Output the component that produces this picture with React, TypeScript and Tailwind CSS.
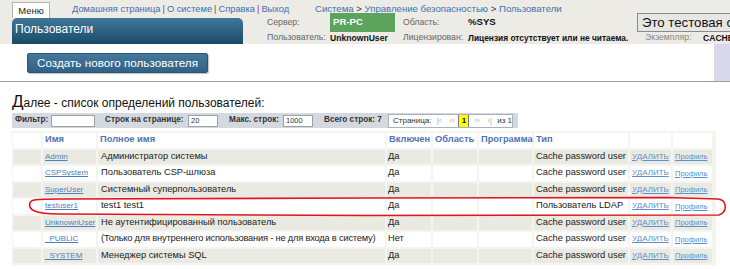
import React from "react";

const rows: [string, string, string, string][] = [
  ["Admin", "Администратор системы", "Да", "Cache password user"],
  ["CSPSystem", "Пользователь CSP-шлюза", "Да", "Cache password user"],
  ["SuperUser", "Системный суперпользователь", "Да", "Cache password user"],
  ["testuser1", "test1 test1", "Да", "Пользователь LDAP"],
  ["UnknownUser", "Не аутентифицированный пользователь", "Да", "Cache password user"],
  ["_PUBLIC", "(Только для внутреннего использования - не для входа в систему)", "Нет", "Cache password user"],
  ["_SYSTEM", "Менеджер системы SQL", "Да", "Cache password user"],
];

function Sep() {
  return <span className="text-[#8a3a66] mx-[2px]">|</span>;
}

export default function App() {
  return (
    <div className="relative w-[730px] h-[269px] overflow-hidden bg-white font-['Liberation_Sans',Arial,sans-serif] text-[#222]">
      {/* Header */}
      <div className="h-[44px] bg-[#ecebe5] flex">
        <div className="w-[267px] shrink-0 pl-[12px] flex flex-col">
          <div className="h-[18px] flex items-start">
            <div className="shrink-0 mt-[2px] w-[38px] h-[16px] bg-white border border-[#b4b4ac] border-b-0 text-[9.4px] leading-[15px] text-center text-[#222]">
              Меню
            </div>
            <div className="shrink-0 ml-[22px] mt-[3px] text-[9.3px] leading-[12px] whitespace-nowrap text-[#3d6fb0]">
              Домашняя страница<Sep />О системе<Sep />Справка<Sep />Выход
            </div>
          </div>
          <div className="w-[231px] h-[26px] rounded-t-[5px] bg-gradient-to-b from-[#3f7899] to-[#1b4a68] text-white text-[12px] leading-[14px] pl-[3px] pt-[3.5px]">
            Пользователи
          </div>
        </div>
        <div className="flex-1 flex flex-col text-[8.7px] whitespace-nowrap">
          <div className="h-[13px] pl-[48px] pt-[3px] text-[9.6px] leading-[11px] text-[#3f72b0]">
            Система <span className="text-[#333]">&gt;</span> Управление безопасностью <span className="text-[#333]">&gt;</span> Пользователи
          </div>
          <div className="h-[19px] flex items-center">
            <div className="w-[63px] shrink-0 text-[#666]">Сервер:</div>
            <div className="w-[65px] shrink-0 h-[19px] bg-[#5ca35e] text-white font-bold text-[9.6px] flex items-center pl-[3px]">PR-PC</div>
            <div className="ml-[8px] w-[65px] shrink-0 text-[#666]">Область:</div>
            <div className="w-[169px] shrink-0 font-bold text-[9.6px] text-[#111]">%SYS</div>
            <div className="h-[19px] w-[120px] shrink-0 bg-[#e6e6e4] border border-[#8a8a8a] text-[13.2px] leading-[17px] pl-[4px] text-[#111]">
              Это тестовая система
            </div>
          </div>
          <div className="h-[12px] flex items-center">
            <div className="w-[63px] shrink-0 text-[#666]">Пользователь:</div>
            <div className="w-[73px] shrink-0 font-bold text-[8.6px] text-[#111]">UnknownUser</div>
            <div className="w-[65px] shrink-0 text-[#666]">Лицензирован:</div>
            <div className="w-[177px] shrink-0 font-bold text-[8.4px] text-[#111]">Лицензия отсутствует или не читаема.</div>
            <div className="w-[58px] shrink-0 text-[#888]">Экземпляр:</div>
            <div className="shrink-0 font-bold text-[8.6px] text-[#111]">CACHE</div>
          </div>
        </div>
      </div>

      {/* Button area */}
      <div className="h-[38px] flex border-b border-[#9c9c9c]">
        <div className="pl-[27px] pt-[9px]">
          <div className="w-[181px] h-[20px] rounded-[2px] bg-gradient-to-b from-[#44779a] to-[#2f6284] border border-[#2a5675] shadow-[1px_1px_1px_rgba(0,0,0,0.25)] text-white text-[11.7px] leading-[18px] text-center">
            Создать нового пользователя
          </div>
        </div>
        <div className="ml-auto w-[16px] h-full bg-[#d8d8ea]" />
      </div>

      {/* Heading */}
      <div className="h-[31px] pl-[12px] pt-[11px] leading-[17px] text-[12px] text-[#111] whitespace-nowrap">
        <span className="text-[17px]">Д</span>алее - список определений пользователей:
      </div>

      {/* Filter bar */}
      <div className="ml-[12px] w-[506px] h-[15px] bg-[#d3d9df] flex items-center pl-[3px] text-[8.2px] font-bold text-[#333] whitespace-nowrap">
        <div className="w-[36px] shrink-0">Фильтр:</div>
        <div className="w-[44px] shrink-0 h-[12px] bg-white border border-[#a0a0a0]" />
        <div className="ml-[10px] w-[83px] shrink-0">Строк на странице:</div>
        <div className="w-[30px] shrink-0 h-[12px] bg-white border border-[#a0a0a0] text-[7.5px] font-normal leading-[10px] pl-[2px]">20</div>
        <div className="ml-[11px] w-[54px] shrink-0">Макс. строк:</div>
        <div className="w-[30px] shrink-0 h-[12px] bg-white border border-[#a0a0a0] text-[7.5px] font-normal leading-[10px] pl-[2px]">1000</div>
        <div className="ml-[11px] w-[64px] shrink-0">Всего строк: 7</div>
        <div className="w-[125px] shrink-0 h-[14px] bg-white border border-[#aab1b9] flex items-center pl-[4px] font-normal text-[8px] text-[#333]">
          <span className="w-[44px]">Страница:</span>
          <span className="w-[13px] text-[#aaa]">|‹</span>
          <span className="w-[9px] text-[#aaa]">‹‹</span>
          <span className="w-[11px] h-[12px] bg-[#ffff00] border-x border-[#777] font-bold text-center leading-[12px] text-[#111]">1</span>
          <span className="ml-[5px] w-[13px] text-[#aaa]">››</span>
          <span className="w-[10px] text-[#aaa]">›|</span>
          <span>из 1</span>
        </div>
      </div>

      {/* Table */}
      <div className="mt-[3px] ml-[12px] w-[704px] bg-[#f4f4f0] pt-[2px] pb-[2px] pl-[1px] pr-[3px]">
        <div className="grid grid-cols-[28px_53px_287px_44px_44px_53px_94px_41px_39px] auto-rows-[14.5px] gap-[2px] text-[9.3px] whitespace-nowrap">
          {["", "Имя", "Полное имя", "Включен", "Область", "Программа", "Тип", "", ""].map((h, i) => (
            <div key={"h" + i} className="bg-white flex items-center pl-[2px] font-bold text-[#4f74b4]">
              {h}
            </div>
          ))}
          {rows.map((r, idx) => {
            const bg = idx % 2 === 0 ? "bg-[#eaeae2]" : "bg-white";
            const long = r[1].length > 50;
            return (
              <React.Fragment key={r[0]}>
                <div className={bg} />
                <div className={`${bg} flex items-center pl-[2px] overflow-hidden`}>
                  <span className="text-[8px] text-[#4d80c2] underline">{r[0]}</span>
                </div>
                <div className={`${bg} flex items-center pl-[3px] overflow-hidden ${long ? "tracking-[-0.2px]" : ""}`}>{r[1]}</div>
                <div className={`${bg} flex items-center pl-[1px]`}>{r[2]}</div>
                <div className={bg} />
                <div className={bg} />
                <div className={`${bg} flex items-center pl-[2px] overflow-hidden`}>{r[3]}</div>
                <div className={`${bg} flex items-center pl-[2px]`}>
                  <span className="text-[8px] text-[#5a8fd0] underline">УДАЛИТЬ</span>
                </div>
                <div className={`${bg} flex items-center pl-[2px]`}>
                  <span className="text-[7.5px] text-[#5a8fd0] underline">Профиль</span>
                </div>
              </React.Fragment>
            );
          })}
        </div>
      </div>

      {/* Red annotation */}
      <svg className="absolute inset-0 pointer-events-none" width="730" height="269" viewBox="0 0 730 269">
        <path
          d="M 30 203 C 30 199.5, 36 199, 60 199 L 365 198 L 667 197.5 L 718 199 C 727 200, 728 212, 719 215 L 365 215.5 L 60 214 C 33 214, 28 209, 30 203 Z"
          fill="none"
          stroke="#e3141c"
          strokeWidth="1.6"
        />
      </svg>
    </div>
  );
}
